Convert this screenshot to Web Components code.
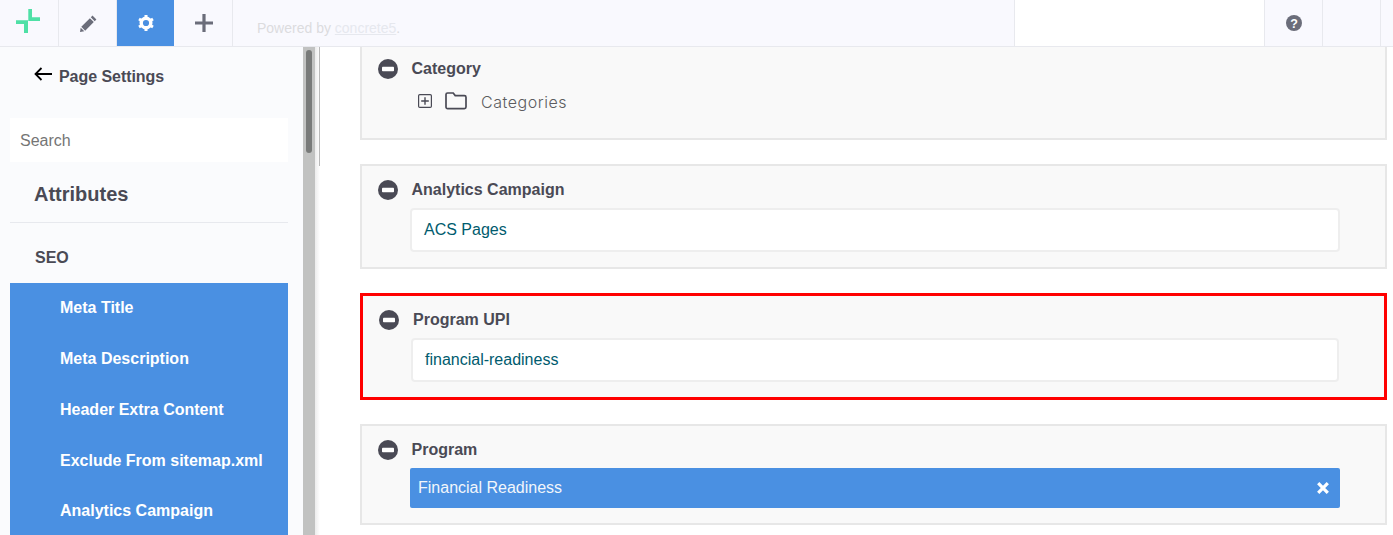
<!DOCTYPE html>
<html>
<head>
<meta charset="utf-8">
<title>Page Settings</title>
<style>
  html, body { margin: 0; height: 100%; overflow: hidden; background: #fff; }
  body { font-family: "Liberation Sans", Arial, sans-serif; color: #4a4a55; }
</style>
</head>
<body>

<template id="cm-app-template">
  <style>
    :host { display: grid; grid-template-rows: 47px 1fr; height: 535px; overflow: hidden; }
    .body { display: flex; min-height: 0; overflow: hidden; }
  </style>
  <slot name="toolbar"></slot>
  <div class="body">
    <slot name="sidebar"></slot>
    <slot></slot>
  </div>
</template>

<template id="cm-toolbar-template">
  <style>
    :host { display: flex; height: 47px; box-sizing: border-box; background: #f9f9fe; border-bottom: 1px solid #e8e9ee; }
    .powered { flex: 1; padding: 20px 0 0 24px; font-size: 14px; line-height: 16px; color: #dcdcde; }
    .powered a { color: #e6e8ee; text-decoration: underline; }
    .search { width: 249px; background: #fff; border-left: 1px solid #e8e9ee; }
  </style>
  <slot name="left"></slot>
  <div class="powered">Powered by <a>concrete5</a>.</div>
  <div class="search"></div>
  <slot name="right"></slot>
</template>

<template id="cm-tool-button-template">
  <style>
    :host { display: flex; align-items: center; justify-content: center; box-sizing: border-box; width: 58px; color: #6b6d7a; border-right: 1px solid #e8e9ee; }
    :host([first]) { width: 59px; }
    :host([active]) { background: #4a90e2; color: #fff; border-right-color: #f9f9fe; }
    :host([leading]) { border-right: 0; border-left: 1px solid #e8e9ee; }
    :host([tail]) { width: 13px; }
  </style>
  <slot></slot>
</template>

<template id="cm-sidebar-template">
  <style>
    :host { display: flex; flex: none; width: 320px; background: #fff; }
    .pane { width: 303px; box-sizing: border-box; padding: 0 15px 0 10px; background: #fafbfd; }
    .track { width: 12px; background: #c1c2c1; padding: 3px; box-sizing: border-box; }
    .thumb { height: 103px; border-radius: 3px; background: #787a79; }
    .edge { width: 5px; box-sizing: border-box; background: linear-gradient(90deg, #ececec, #fff); }
    .edge i { display: block; width: 1px; height: 119px; margin-left: 4px; background: #b9b9b9; }
    header { display: flex; align-items: center; height: 59px; padding: 0 0 0 24px; margin-bottom: 12px; font-size: 16px; font-weight: bold; letter-spacing: -.05px; }
    header svg { margin-right: 7px; margin-top: -6px; }
    .search { height: 44px; line-height: 46px; padding-left: 10px; background: #fff; color: #757575; font-size: 16px; }
    h2 { margin: 0; height: 61px; line-height: 64px; box-sizing: border-box; padding-left: 24px; font-size: 20px; font-weight: bold; border-bottom: 1px solid #e7e9ee; }
    h3 { margin: 0; height: 60px; line-height: 69px; padding-left: 25px; box-sizing: border-box; font-size: 16px; font-weight: bold; }
    .menu { background: #4a90e2; }
  </style>
  <div class="pane">
    <header>
      <svg width="18" height="14" viewBox="0 0 18 14" fill="none" stroke="#000" stroke-width="1.8"><path d="M18 7H1.5M7.5 1L1.5 7l6 6"/></svg>
      Page Settings
    </header>
    <div class="search">Search</div>
    <h2>Attributes</h2>
    <h3>SEO</h3>
    <div class="menu"><slot></slot></div>
  </div>
  <div class="track"><div class="thumb"></div></div>
  <div class="edge"><i></i></div>
</template>

<template id="cm-menu-item-template">
  <style>
    :host { display: block; height: 51px; line-height: 49px; padding-left: 50px; color: #fff; font-size: 16px; font-weight: bold; }
    :host(:nth-child(4)) { height: 50px; }
  </style>
  <slot></slot>
</template>

<template id="cm-main-template">
  <style>
    :host { display: flex; flex-direction: column; gap: 24px; flex: 1; min-width: 0; padding: 0 6px 0 40px; }
  </style>
  <slot></slot>
</template>

<template id="cm-attr-panel-template">
  <style>
    :host { display: block; flex: none; box-sizing: border-box; height: var(--panel-height, 105px); padding: 14px 45px 0 16px; background: #f9f9f9; border: 2px solid #e7e7e7; }
    :host([clipped]) { border-top: 0; padding-top: 12px; }
    :host([marked]) { border: 3px solid #f00; }
    .head { display: flex; align-items: center; gap: 13.5px; height: 20px; margin-bottom: 8px; font-size: 16px; font-weight: bold; color: #4a4a55; }
    :host([marked]) .head { gap: 14px; }
    .head svg { display: block; flex: none; }
    .body { margin-left: 32px; }
  </style>
  <div class="head">
    <svg width="20" height="20" viewBox="0 0 20 20"><circle cx="10" cy="10" r="10" fill="#4a4a55"/><rect x="4" y="7.7" width="12" height="4.6" rx=".8" fill="#fff"/></svg>
    <span><slot name="label"></slot></span>
  </div>
  <div class="body"><slot></slot></div>
</template>

<template id="cm-text-field-template">
  <style>
    :host { display: block; box-sizing: border-box; height: 44px; padding-left: 12px; line-height: 40px; background: #fff; border: 2px solid #eee; border-radius: 4px; color: #005b6e; font-size: 16px; }
  </style>
  <slot></slot>
</template>

<template id="cm-select-tag-template">
  <style>
    :host { display: flex; align-items: center; justify-content: space-between; height: 40px; padding: 0 11px 0 8px; background: #4a90e2; border-radius: 2px; color: #f2f6fb; font-size: 16px; }
    svg { display: block; }
  </style>
  <span><slot></slot></span>
  <svg width="12" height="12" viewBox="0 0 12 12" stroke="#fff" stroke-width="3.2"><path d="M1.2 1.200l9.600 9.600M10.800 1.200l-9.600 9.600"/></svg>
</template>

<template id="cm-tree-node-template">
  <style>
    :host { display: flex; align-items: center; height: 20px; margin: 12px 0 0 8px; font-family: "Inter", "Liberation Sans", sans-serif; font-size: 16px; letter-spacing: .55px; font-weight: 300; color: #5c5c60; }
    svg { display: block; flex: none; }
    .box { margin-right: 13px; }
    .folder { margin-right: 14px; }
    span { padding-top: 2px; }
  </style>
  <svg class="box" width="14" height="14" viewBox="0 0 14 14" fill="none" stroke="#4a4a55" stroke-width="1.2"><rect x=".6" y=".6" width="12.800" height="12.800" rx="1.2"/><path d="M7 3.200v7.600M3.200 7h7.600" stroke-width="1.4"/></svg>
  <svg class="folder" width="22" height="18" viewBox="0 0 22 18" fill="none" stroke="#4a4a55" stroke-width="1.7"><path d="M2.600 1h5.600l2 2.600h9.200c.9 0 1.600.7 1.600 1.600v9.900c0 .9-.7 1.600-1.600 1.600H2.600c-.9 0-1.600-.7-1.600-1.600V2.600C1 1.700 1.700 1 2.600 1z"/></svg>
  <span><slot></slot></span>
</template>

<cm-app>
  <cm-toolbar slot="toolbar">
    <cm-tool-button slot="left" first>
      <svg width="24" height="24" viewBox="0 0 24 24" fill="#4fe0a6" style="margin:-4px 2px 0 0"><path d="M12.300 0h3.700v8.300h8v3.700H12.300zM0 11.300h12v13h-4v-9.300H0z"/></svg>
    </cm-tool-button>
    <cm-tool-button slot="left">
      <svg width="17" height="17" viewBox="0 0 17 17" fill="currentColor" style="margin-left:1px"><path d="M12.500 0.600l3.900 3.900-1.700 1.700-3.900-3.900zM9.900 3.200l3.900 3.900-8.600 8.600-3.900-3.900zM.700 12.700l3.600 3.600-4.300.7z"/></svg>
    </cm-tool-button>
    <cm-tool-button slot="left" active>
      <svg width="16" height="16" viewBox="0 0 16 16"><circle cx="8" cy="8" r="4.800" fill="none" stroke="#fff" stroke-width="3.400"/><g stroke="#fff" stroke-width="3"><path d="M8 0v3M8 13v3M1 4l2.600 1.500M12.400 10.500L15 12M1 12l2.600-1.500M12.400 5.500L15 4"/></g></svg>
    </cm-tool-button>
    <cm-tool-button slot="left">
      <svg width="18" height="18" viewBox="0 0 18 18" fill="currentColor"><path d="M7.400 0h3.200v7.400H18v3.200h-7.400V18H7.400v-7.400H0V7.400h7.400z"/></svg>
    </cm-tool-button>
    <cm-tool-button slot="right" leading>
      <svg width="16" height="16" viewBox="0 0 16 16"><circle cx="8" cy="8" r="8" fill="#6b6d7a"/><text x="8" y="12.500" text-anchor="middle" font-family="Liberation Sans" font-weight="bold" font-size="12.500" fill="#fff">?</text></svg>
    </cm-tool-button>
    <cm-tool-button slot="right" leading></cm-tool-button>
    <cm-tool-button slot="right" leading tail></cm-tool-button>
  </cm-toolbar>

  <cm-sidebar slot="sidebar">
    <cm-menu-item>Meta Title</cm-menu-item>
    <cm-menu-item>Meta Description</cm-menu-item>
    <cm-menu-item>Header Extra Content</cm-menu-item>
    <cm-menu-item>Exclude From sitemap.xml</cm-menu-item>
    <cm-menu-item>Analytics Campaign</cm-menu-item>
  </cm-sidebar>

  <cm-main>
    <cm-attr-panel clipped style="--panel-height:93px">
      <span slot="label">Category</span>
      <cm-tree-node>Categories</cm-tree-node>
    </cm-attr-panel>
    <cm-attr-panel>
      <span slot="label">Analytics Campaign</span>
      <cm-text-field>ACS Pages</cm-text-field>
    </cm-attr-panel>
    <cm-attr-panel marked style="--panel-height:107px">
      <span slot="label">Program UPI</span>
      <cm-text-field>financial-readiness</cm-text-field>
    </cm-attr-panel>
    <cm-attr-panel style="--panel-height:101px">
      <span slot="label">Program</span>
      <cm-select-tag>Financial Readiness</cm-select-tag>
    </cm-attr-panel>
  </cm-main>
</cm-app>

<script>
  // each element just stamps its template into an open shadow root
  class TemplatedElement extends HTMLElement {
    constructor() {
      super();
      const template = document.getElementById(`${this.localName}-template`);
      this.attachShadow({ mode: "open" }).appendChild(template.content.cloneNode(true));
    }
  }

  ["cm-app", "cm-toolbar", "cm-tool-button", "cm-sidebar", "cm-menu-item", "cm-main",
   "cm-attr-panel", "cm-text-field", "cm-select-tag", "cm-tree-node"].forEach((name) => {
    customElements.define(name, class extends TemplatedElement {});
  });
</script>
</body>
</html>
